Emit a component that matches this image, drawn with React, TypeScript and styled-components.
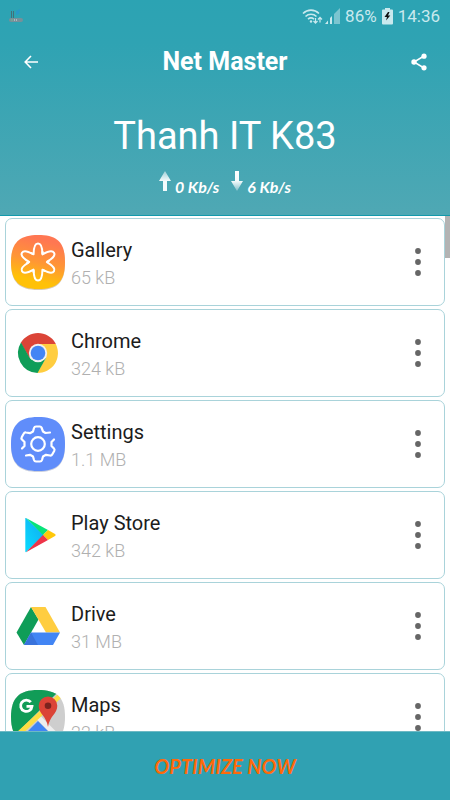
import React from "react";
import styled, { createGlobalStyle } from "styled-components";

const GlobalStyle = createGlobalStyle`
  * { box-sizing: border-box; }
  body { margin: 0; background: #fff; font-family: Roboto, "Noto Sans", sans-serif; }
  button { font: inherit; border: 0; background: none; padding: 0; cursor: pointer; }
  svg { display: block; }
`;

const Page = styled.div`
  display: flex;
  flex-direction: column;
  height: 100vh;
  background: #fff;
`;

const Header = styled.header`
  flex: none;
  color: #fff;
  background: linear-gradient(#2ca3b3 0%, #2fa3b3 20%, #4fa8b4 100%);
  border-bottom: 1px solid #129aac;
`;

const StatusBar = styled.div`
  display: flex;
  align-items: center;
  justify-content: space-between;
  height: 32px;
  padding: 0 10px 0 9px;
  color: #c9e9ee;
`;

const StatusItems = styled.div`
  display: flex;
  align-items: center;
  gap: 5px;
  font-size: 17px;
  line-height: 32px;
`;

const StatusIcons = styled.span`
  display: flex;
  align-items: center;
  gap: 2px;
`;

const StatusText = styled.span`
  font-weight: 400;
`;

const TitleBar = styled.div`
  display: flex;
  align-items: center;
  justify-content: space-between;
  height: 60px;
  padding: 0 18px;
`;

const Title = styled.h1`
  margin: 0;
  font-size: 25px;
  line-height: 32px;
  font-weight: 700;
`;

const IconButton = styled.button`
  display: grid;
  place-items: center;
  width: 26px;
  height: 40px;
  color: inherit;
`;

const NetworkName = styled.h2`
  margin: 20px 0 0;
  font-size: 38px;
  line-height: 48px;
  font-weight: 400;
  text-align: center;
`;

const Speeds = styled.div`
  display: flex;
  justify-content: center;
  gap: 12px;
  padding: 11px 0 12px;
`;

const Speed = styled.span`
  display: flex;
  align-items: flex-start;
  gap: 4px;
  font-family: Lato, sans-serif;
  font-style: italic;
  font-weight: 700;
  font-size: 16px;
  line-height: 32px;
`;

const ListArea = styled.main`
  position: relative;
  flex: 1;
  min-height: 0;
`;

const AppList = styled.ul`
  height: 100%;
  margin: 0;
  padding: 2px 5px;
  list-style: none;
  overflow-y: auto;
  scrollbar-width: none;
`;

const ScrollThumb = styled.div`
  position: absolute;
  top: 0;
  right: 0;
  width: 5px;
  height: 42px;
  background: #b3b3b3;
`;

const AppCard = styled.li`
  display: flex;
  align-items: center;
  height: 88px;
  margin-bottom: 3px;
  padding: 0 13px 0 4px;
  border: 1px solid #a9d3da;
  border-radius: 7px;
  background: #fff;
`;

const AppText = styled.div`
  flex: 1;
  padding: 3px 0 0 5px;
`;

const AppName = styled.div`
  color: #1c1c1c;
  font-size: 20px;
  line-height: 28px;
`;

const AppUsage = styled.div`
  color: #b0b0b0;
  font-size: 18px;
  line-height: 28px;
  font-weight: 300;
`;

const Footer = styled.footer`
  flex: none;
  border-top: 1px solid #6db9c4;
  background: #30a1b2;
`;

const OptimizeButton = styled.button`
  && {
    display: block;
    width: 100%;
    height: 68px;
    color: #ff6a0a;
    font-family: Lato, sans-serif;
    font-size: 20px;
    line-height: 28px;
    font-style: italic;
    font-weight: 700;
  }
`;

const squircle = "M27 0C46 0 54 7 54 27S46 54 27 54 0 46 0 27 8 0 27 0Z";

const RouterIcon = () => (
  <svg width="14" height="14" viewBox="0 0 14 14" aria-hidden="true">
    <path d="M2.500 2v7M4.500 2v7" stroke="#436f79" />
    <path d="M7 2l4-2-1 5-3 1z" fill="#2898c8" />
    <rect y="9" width="14" height="4" rx="2" fill="#76909a" />
    <path d="M2 11h2" stroke="#76b68e" />
    <path d="M5 11h4" stroke="#e8dfe5" strokeDasharray="1 1" />
  </svg>
);

const WifiIcon = () => (
  <svg width="21" height="17" viewBox="0 0 21 17" fill="none" stroke="currentColor" aria-hidden="true">
    <path d="M1 5.500C5.500 1 12.500 1 17 5.500M3.500 8.500c3-3 8-3 11 0M6 11.200c2-1.700 4-1.700 6 0" strokeWidth="1.600" />
    <circle cx="9" cy="13.500" r="1.200" fill="currentColor" stroke="none" />
    <path d="M13.500 10v5M11.500 13l2 2.200 2-2.200M18 14.500V9.500M16 11.500l2-2.200 2 2.200" strokeWidth="1.200" />
  </svg>
);

const SignalIcon = () => (
  <svg width="15" height="16" viewBox="0 0 15 16" aria-hidden="true">
    <path d="M15 0v16H9V6z" fill="#7cc5d0" />
    <path d="M7 8v8H5v-6zM3 12.500V16H0z" fill="currentColor" />
  </svg>
);

const BatteryIcon = () => (
  <svg width="11" height="17" viewBox="0 0 11 17" aria-hidden="true">
    <path d="M3 1.500V0h5v1.500h2q1 0 1 1V15.500q0 1-1 1H1q-1 0-1-1v-13q0-1 1-1z" fill="#c9e9ee" />
    <path d="M6 4 2.500 9H5L4 12.500l4.300-5H6L7.500 4z" fill="#111" />
  </svg>
);

const BackIcon = () => (
  <svg width="14" height="14" viewBox="0 0 14 14" fill="none" stroke="currentColor" strokeWidth="1.600" aria-hidden="true">
    <path d="M14 7H1.500M7 1 1.200 7 7 13" />
  </svg>
);

const ShareIcon = () => (
  <svg width="16" height="18" viewBox="0 0 16 18" fill="currentColor" aria-hidden="true">
    <path d="M13 3 3 9l10 6" fill="none" stroke="currentColor" strokeWidth="1.500" />
    <circle cx="13" cy="3.200" r="2.600" />
    <circle cx="3" cy="9" r="2.700" />
    <circle cx="13" cy="14.800" r="2.600" />
  </svg>
);

const ArrowIcon = ({ down }: { down?: boolean }) => {
  const id = down ? "arrowDown" : "arrowUp";
  return (
    <svg width="12" height="20" viewBox="0 0 12 20" aria-hidden="true">
      <defs>
        <linearGradient id={id} x1="0" y1="0" x2="0" y2="1">
          <stop offset="0" stopColor={down ? "#fff" : "#9ed0d7"} />
          <stop offset="0.500" stopColor="#f4fbfc" />
          <stop offset="1" stopColor={down ? "#80bfc9" : "#f4fbfc"} />
        </linearGradient>
      </defs>
      <path d={down ? "M4 0h4v10h4L6 20 0 10h4z" : "M6 0l6 10H8v10H4V10H0z"} fill={`url(#${id})`} />
    </svg>
  );
};

const DotsIcon = () => (
  <svg width="6" height="28" viewBox="0 0 6 28" fill="#666" aria-hidden="true">
    <circle cx="3" cy="3" r="2.900" />
    <circle cx="3" cy="14" r="2.900" />
    <circle cx="3" cy="25" r="2.900" />
  </svg>
);

const AppIcon = ({ children }: { children: React.ReactNode }) => (
  <svg width="56" height="56" viewBox="-1 -1 56 56" aria-hidden="true">{children}</svg>
);

const GalleryIcon = () => (
  <AppIcon>
    <defs>
      <linearGradient id="gallery" x1="0.650" y1="0" x2="0.400" y2="1">
        <stop offset="0.100" stopColor="#ff7752" />
        <stop offset="0.500" stopColor="#ff9635" />
        <stop offset="0.850" stopColor="#ffc107" />
      </linearGradient>
    </defs>
    <path d={squircle} transform="translate(0 1)" fill="#d8c9b4" />
    <path d={squircle} fill="url(#gallery)" />
    <g fill="none" stroke="#fff" strokeWidth="2" strokeLinecap="round" strokeLinejoin="round">
      {[0, 60, 120, 180, 240, 300].map((angle) => (
        <path key={angle} d="M31.300 18.500C31.300 13 30 8.500 27 8.500 24 8.500 22.600 13 22.600 19.300L20.500 18" transform={`rotate(${angle} 27 27)`} />
      ))}
    </g>
  </AppIcon>
);

const ChromeIcon = () => (
  <AppIcon>
    <path d="M9.700 17 18.500 32 27 18H44.800L44.300 17A20 20 0 0 0 9.700 17" fill="#db4437" />
    <path d="M27 18h17.800A20 20 0 0 1 26 47l9-15z" fill="#ffcd40" />
    <path d="M10 16.500 18.500 31.500Q22 37 35 32L26.500 47A20 20 0 0 1 10 16.500" fill="#0f9d58" />
    <circle cx="27" cy="27" r="9.200" fill="#f1f1f1" />
    <circle cx="27" cy="27" r="7.300" fill="#4285f4" />
  </AppIcon>
);

const SettingsIcon = () => (
  <AppIcon>
    <path d={squircle} transform="translate(0 1)" fill="#cbd0de" />
    <path d={squircle} fill="#608dfa" />
    <g fill="none" stroke="#fff" strokeWidth="2.200" strokeLinecap="round" strokeLinejoin="round">
      <circle cx="27" cy="27" r="6.800" />
      <path d="M39 15.500 34.500 16 32 14.500 30.500 10.500Q30 9.500 29 9.500H25Q23.500 9.500 23 11L22 14.500 19 16.200 15 15.500Q13.500 15.200 12.800 16.500L10.800 20Q10 21.500 11 22.500L13.500 25V29L11 31.500" />
      <path d="M15 38.500 19 37.800 22 39.500 23 43Q23.500 44.500 25 44.500H29Q30.500 44.500 31 43L32 39.500 35 37.800 39 38.500Q40.500 38.800 41.200 37.500L43.200 34Q44 32.500 43 31.500L40.500 29V25L43 22.500" />
    </g>
  </AppIcon>
);

const PlayIcon = () => (
  <AppIcon>
    <defs>
      <linearGradient id="playBlue" x1="1" y1="0" x2="0" y2="1">
        <stop offset="0" stopColor="#12a9ef" />
        <stop offset="1" stopColor="#08dcff" />
      </linearGradient>
    </defs>
    <path d="M14.300 10.500Q14.300 9.800 15 10L33 27 15 44.300Q14.300 44.300 14.300 43.500z" fill="url(#playBlue)" />
    <path d="M15 10 37 22 32 27z" fill="#08e37a" />
    <path d="M37 22 44 26Q45.500 27 44 28L37 32 32 27z" fill="#ffc80a" />
    <path d="M37 32 15 44.300 32 27z" fill="#ee3448" />
  </AppIcon>
);

const DriveIcon = () => (
  <AppIcon>
    <path d="M20 8 27.500 20.500 13 46 5.500 33.500z" fill="#0f9d58" />
    <path d="M20 8H34.500L49 33.500H35z" fill="#ffcd40" />
    <path d="M20 33.500H49L42 46H13z" fill="#4285f4" />
    <path d="M20 33.500 27 46H13z" fill="#3973dc" />
  </AppIcon>
);

const MapsIcon = () => (
  <AppIcon>
    <defs>
      <clipPath id="mapsClip"><path d={squircle} /></clipPath>
    </defs>
    <g clipPath="url(#mapsClip)">
      <path d="M0 0h54v54H0z" fill="#cecece" />
      <path d="M0 0h49L0 49z" fill="#119c57" />
      <path d="M27 31 50 54H4z" fill="#4285f4" />
      <path d="M26 26 54 54" stroke="#eee" strokeWidth="5" />
      <path d="M53 2 0 51" stroke="#fddd42" strokeWidth="5" />
    </g>
    <path d="M19.800 12.200A5.700 5.700 0 1 0 21 16.300H15.500" fill="none" stroke="#fff" strokeWidth="2.800" />
    <path d="M37 6.500a9.300 9.300 0 0 1 9.300 9.300C46.300 24 38.500 26 37 37 35.500 26 27.700 24 27.700 15.800A9.300 9.300 0 0 1 37 6.500Z" fill="#db4437" />
    <circle cx="37" cy="15.800" r="3.300" fill="#7b231e" />
  </AppIcon>
);

const apps = [
  { name: "Gallery", usage: "65 kB", Icon: GalleryIcon },
  { name: "Chrome", usage: "324 kB", Icon: ChromeIcon },
  { name: "Settings", usage: "1.1 MB", Icon: SettingsIcon },
  { name: "Play Store", usage: "342 kB", Icon: PlayIcon },
  { name: "Drive", usage: "31 MB", Icon: DriveIcon },
  { name: "Maps", usage: "22 kB", Icon: MapsIcon },
];

export default function App() {
  return (
    <Page>
      <GlobalStyle />
      <Header>
        <StatusBar>
          <RouterIcon />
          <StatusItems>
            <StatusIcons>
              <WifiIcon />
              <SignalIcon />
            </StatusIcons>
            <StatusText>86%</StatusText>
            <BatteryIcon />
            <StatusText>14:36</StatusText>
          </StatusItems>
        </StatusBar>
        <TitleBar>
          <IconButton type="button" aria-label="Back"><BackIcon /></IconButton>
          <Title>Net Master</Title>
          <IconButton type="button" aria-label="Share"><ShareIcon /></IconButton>
        </TitleBar>
        <NetworkName>Thanh IT K83</NetworkName>
        <Speeds>
          <Speed><ArrowIcon />0 Kb/s</Speed>
          <Speed><ArrowIcon down />6 Kb/s</Speed>
        </Speeds>
      </Header>
      <ListArea>
        <AppList>
          {apps.map(({ name, usage, Icon }) => (
            <AppCard key={name}>
              <Icon />
              <AppText>
                <AppName>{name}</AppName>
                <AppUsage>{usage}</AppUsage>
              </AppText>
              <IconButton type="button" aria-label={`${name} options`}><DotsIcon /></IconButton>
            </AppCard>
          ))}
        </AppList>
        <ScrollThumb />
      </ListArea>
      <Footer>
        <OptimizeButton type="button">OPTIMIZE NOW</OptimizeButton>
      </Footer>
    </Page>
  );
}
